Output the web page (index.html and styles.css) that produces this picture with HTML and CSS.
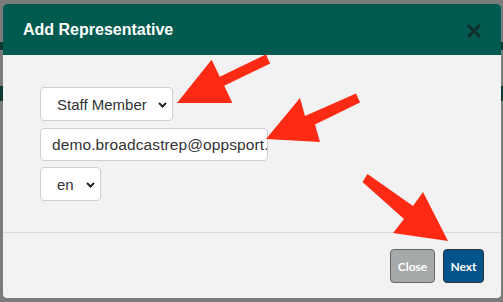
FILE: index.html
```html
<!doctype html>
<html>

<head>
    <link rel="stylesheet" href="styles.css">
</head>

<body>
    <div class="backdrop">
        <div class="band band-top"></div>
        <div class="band band-mid"></div>
    </div>
    <div class="modal">
        <div class="modal-header">
            <h4 class="modal-title">Add Representative</h4>
            <button class="close-x" type="button">
                <svg width="14" height="14" viewBox="0 0 14 14">
                    <path d="M2 2 L12 12 M12 2 L2 12" stroke="#102f2a" stroke-width="3" stroke-linecap="round" />
                </svg>
            </button>
        </div>
        <div class="modal-body">
            <div class="field">
                <select class="pick pick-role">
                    <option>Staff Member</option>
                </select>
                <svg class="chev" width="9" height="6" viewBox="0 0 9 6">
                    <path d="M1 1 L4.5 4.5 L8 1" fill="none" stroke="#222" stroke-width="2" />
                </svg>
            </div>
            <input class="email" type="email" value="demo.broadcastrep@oppsport.com">
            <div class="field">
                <select class="pick pick-lang">
                    <option>en</option>
                </select>
                <svg class="chev" width="9" height="6" viewBox="0 0 9 6">
                    <path d="M1 1 L4.5 4.5 L8 1" fill="none" stroke="#222" stroke-width="2" />
                </svg>
            </div>
        </div>
        <div class="modal-footer">
            <button class="btn btn-close" type="button">Close</button>
            <button class="btn btn-next" type="button">Next</button>
        </div>
    </div>
    <svg class="arrows" width="503" height="302" viewBox="0 0 503 302">
        <!-- role arrow -->
        <polygon fill="#ff2a14" points="265.8,54.5 219.8,76.8 211.6,59.7 177,103 232.4,102.9 224.2,85.8 270.2,63.5" />
        <!-- email arrow -->
        <polygon fill="#ff2a14" points="356,93.5 305,116 300,98 266,139 320,142 315,124.5 360,102.5" />
        <!-- next arrow -->
        <polygon fill="#ff2a14" points="367.5,174 413,206 423,192 448,241 393,233 404,219 362.5,182" />
    </svg>
</body>

</html>
```
FILE: styles.css
```css
body,
html {
    margin: 0;
    padding: 0;
    width: 100%;
    height: 100%;
    overflow: hidden;
    font-family: "Liberation Sans", Arial, sans-serif;
}

body {
    background-color: #7b7b7b;
    position: relative;
}

.backdrop {
    position: absolute;
    top: 0;
    left: 0;
    width: 503px;
    height: 302px;
}

.band {
    position: absolute;
    left: 0;
    width: 503px;
    background-color: #0d3a33;
}

.band-top {
    top: 42px;
    height: 8px;
}

.band-mid {
    top: 86px;
    height: 15px;
}

.modal {
    position: relative;
    margin: 4px 2px 0 3px;
    width: 498px;
    height: 294px;
    border-radius: 4px;
    overflow: hidden;
    background-color: #f2f2f2;
    display: flex;
    flex-direction: column;
}

.modal-header {
    height: 51px;
    background-color: #015a4f;
    display: flex;
    align-items: center;
    justify-content: space-between;
    padding: 0 20px 0 20px;
}

.modal-title {
    margin: 0;
    color: #fff;
    font-size: 16px;
    font-weight: bold;
}

.close-x {
    background: none;
    border: none;
    padding: 0;
    margin-right: 0;
    margin-top: 2px;
    display: flex;
}

.modal-body {
    padding: 32px 37px 31px 37px;
    display: flex;
    flex-direction: column;
    align-items: flex-start;
    gap: 6px;
    border-bottom: 1px solid #d3dbe2;
}

.field {
    position: relative;
}

.pick {
    appearance: none;
    -webkit-appearance: none;
    background-color: #fff;
    border: 1px solid #cfcfcf;
    border-radius: 4px;
    height: 34px;
    font-family: "Liberation Sans", Arial, sans-serif;
    font-size: 15px;
    color: #333;
    padding: 0 0 0 16px;
    display: block;
}

.pick-role {
    width: 133px;
    margin-bottom: 1px;
}

.pick-lang {
    width: 61px;
}

.chev {
    position: absolute;
    top: 15px;
    right: 6px;
}

.email {
    box-sizing: border-box;
    width: 228px;
    height: 33px;
    border: 1px solid #cfcfcf;
    border-radius: 4px;
    background-color: #fff;
    font-family: "Liberation Sans", Arial, sans-serif;
    font-size: 15.5px;
    letter-spacing: 0.1px;
    color: #333;
    padding: 0 0 0 11px;
    margin: 0;
}

.modal-footer {
    flex: 1;
    display: flex;
    justify-content: flex-end;
    align-items: flex-start;
    gap: 8px;
    padding: 16px 17px 0 0;
}

.btn {
    height: 34px;
    border: 1px solid #3f3f3f;
    border-radius: 4px;
    color: #fff;
    font-family: Lato, "Liberation Sans", sans-serif;
    font-weight: bold;
    font-size: 12px;
    cursor: pointer;
    padding: 0;
}

.btn-close {
    width: 45px;
    background-color: #a6a9aa;
    border-color: #666;
}

.btn-next {
    width: 41px;
    background-color: #03548b;
    border-color: #2a3440;
}

.arrows {
    position: absolute;
    top: 0;
    left: 0;
    pointer-events: none;
}
```
